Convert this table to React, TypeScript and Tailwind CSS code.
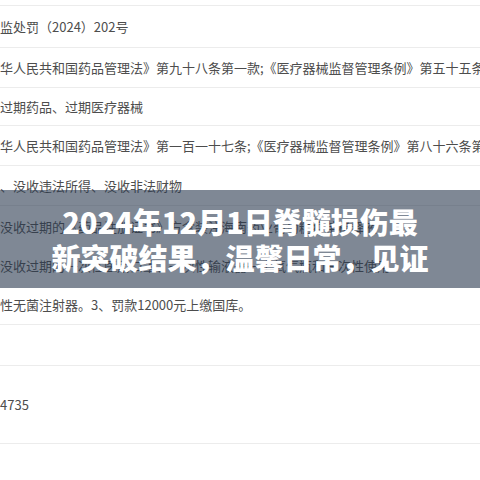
const rows: { h: string; text: string }[] = [
  { h: "h-[42px]", text: "监处罚（2024）202号" },
  { h: "h-[40px]", text: "华人民共和国药品管理法》第九十八条第一款;《医疗器械监督管理条例》第五十五条第一款" },
  { h: "h-[38px]", text: "过期药品、过期医疗器械" },
  { h: "h-[40px]", text: "华人民共和国药品管理法》第一百一十七条;《医疗器械监督管理条例》第八十六条第(三)项" },
  { h: "h-[40px]", text: "、没收违法所得、没收非法财物" },
];

const wrapped = [
  "没收过期的《药品注册证书》方盒装注海南药业葡萄糖疫苗稀释液",
  "没收过期的一次性医用口罩、一次性输液器一个氧气瓶和一次性使用",
  "性无菌注射器。3、罚款12000元上缴国库。",
];

export default function App() {
  return (
    <div
      className="relative w-[480px] h-[480px] bg-white overflow-hidden text-[13px] text-[#4d4d4d]"
      style={{ fontFamily: '"Noto Sans CJK SC", "Noto Sans", sans-serif' }}
    >
      <div className="flex flex-col pt-[5px]">
        {rows.map((r, i) => (
          <div
            key={i}
            className={`${r.h} flex items-center border-t border-[#ececec] whitespace-nowrap`}
          >
            {r.text}
          </div>
        ))}
        <div className="h-[119px] flex flex-col justify-around border-t border-[#ececec] whitespace-nowrap pt-[1px]">
          {wrapped.map((w, i) => (
            <div key={i} className="h-[38px] flex items-center">
              {w}
            </div>
          ))}
        </div>
        <div className="h-[41px] border-t border-[#ececec]" />
        <div className="h-[78px] flex items-center border-t border-[#ececec]">4735</div>
        <div className="border-t border-[#ececec]" />
      </div>

      {/* title band over the table */}
      <div className="absolute left-0 top-[190px] w-full h-[98px] bg-[rgba(42,57,78,0.6)] flex flex-col items-center justify-center">
        <div className="text-white font-black text-[29px] leading-[36px] text-center whitespace-nowrap">
          2024年12月1日脊髓损伤最
        </div>
        <div className="text-white font-black text-[29px] leading-[36px] text-center whitespace-nowrap">
          新突破结果，温馨日常，见证
        </div>
      </div>
    </div>
  );
}
